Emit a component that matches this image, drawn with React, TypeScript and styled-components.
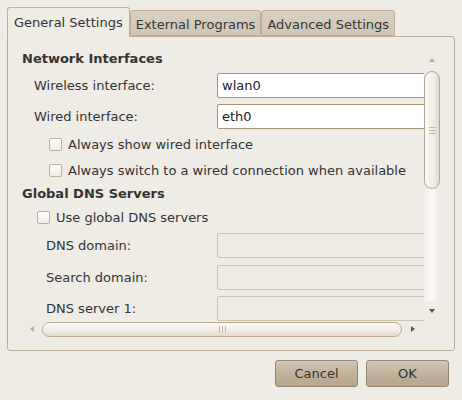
import React from 'react';
import styled, { createGlobalStyle } from 'styled-components';

const GlobalStyle = createGlobalStyle`
  html, body {
    margin: 0;
    padding: 0;
    background: #efebe5;
  }
  body {
    font-family: "DejaVu Sans", "Liberation Sans", sans-serif;
    font-size: 13px;
    color: #343434;
  }
`;

const Dialog = styled.div`
  width: 462px;
  height: 400px;
  box-sizing: border-box;
  padding: 7px 7px 0 7px;
  display: flex;
  flex-direction: column;
`;

const TabBar = styled.div`
  display: flex;
  align-items: flex-end;
  height: 29px;
  position: relative;
  z-index: 1;
`;

const Tab = styled.div<{ $active?: boolean }>`
  box-sizing: border-box;
  height: ${(p) => (p.$active ? '30px' : '26px')};
  margin-bottom: ${(p) => (p.$active ? '-1px' : '0')};
  padding: ${(p) => (p.$active ? '0 6px 1px 6px' : '2px 5px 0 5px')};
  display: flex;
  align-items: center;
  border: 1px solid ${(p) => (p.$active ? '#bfb29b' : '#bcae95')};
  border-bottom: ${(p) => (p.$active ? 'none' : '1px solid #bcae95')};
  border-radius: 3px 3px 0 0;
  background: ${(p) =>
    p.$active ? '#efebe5' : 'linear-gradient(#d9d0c0, #d1c6b3)'};
  white-space: nowrap;
`;

const Panel = styled.div`
  box-sizing: border-box;
  width: 448px;
  height: 315px;
  border: 1px solid #bcae96;
  border-radius: 0 3px 3px 3px;
  padding: 13px 13px 13px 14px;
  display: grid;
  grid-template-columns: 1fr 17px;
  grid-template-rows: 1fr 16px;
`;

const Viewport = styled.div`
  overflow: hidden;
  position: relative;
`;

const Content = styled.div`
  width: 470px;
  display: flex;
  flex-direction: column;
`;

const Heading = styled.div<{ $mt?: number }>`
  font-weight: bold;
  line-height: 17px;
  height: 17px;
  margin-top: ${(p) => p.$mt ?? 0}px;
`;

const FieldRow = styled.div<{ $indent: number; $mt: number }>`
  display: flex;
  align-items: center;
  height: 25px;
  margin-top: ${(p) => p.$mt}px;
  padding-left: ${(p) => p.$indent}px;
`;

const FieldLabel = styled.span<{ $indent: number }>`
  flex: 0 0 ${(p) => 195 - p.$indent}px;
`;

const Entry = styled.div<{ $disabled?: boolean }>`
  box-sizing: border-box;
  width: 260px;
  height: 25px;
  padding-left: 4px;
  display: flex;
  align-items: center;
  border: 1px solid ${(p) => (p.$disabled ? '#cec3ae' : '#a59577')};
  border-radius: 2px;
  background: ${(p) => (p.$disabled ? '#efebe5' : '#ffffff')};
  color: #222;
`;

const CheckRow = styled.label<{ $indent: number; $mt: number }>`
  display: flex;
  align-items: center;
  height: 17px;
  margin-top: ${(p) => p.$mt}px;
  padding-left: ${(p) => p.$indent}px;
  gap: 6px;
`;

const CheckBox = styled.span`
  box-sizing: border-box;
  width: 13px;
  height: 13px;
  border: 1px solid #bdb19b;
  border-radius: 2px;
  background: linear-gradient(#ffffff, #f1ede7);
`;

const VScroll = styled.div`
  display: flex;
  flex-direction: column;
  width: 16px;
`;

const Stepper = styled.div<{ $w: number; $h: number }>`
  width: ${(p) => p.$w}px;
  height: ${(p) => p.$h}px;
  flex: 0 0 auto;
  display: flex;
  align-items: center;
  justify-content: center;
`;

const VThumb = styled.div`
  box-sizing: border-box;
  margin-top: 1px;
  height: 118px;
  border: 1px solid #b6a88f;
  border-radius: 8px;
  background: linear-gradient(to right, #fbfaf7, #f1ece4 60%, #e2d9ca);
  display: flex;
  align-items: center;
  justify-content: center;
`;

const VTrough = styled.div`
  flex: 1;
  background: linear-gradient(to right, #f2eee8, #fbfaf8 50%, #ece7df);
`;

const HScroll = styled.div`
  display: flex;
  align-items: center;
  height: 16px;
`;

const HThumb = styled.div`
  box-sizing: border-box;
  width: 360px;
  flex: 0 0 360px;
  height: 15px;
  border: 1px solid #b6a88f;
  border-radius: 8px;
  background: linear-gradient(#fbfaf7, #f1ece4 60%, #e2d9ca);
  display: flex;
  align-items: center;
  justify-content: center;
`;

const Arrow = styled.span<{ $dir: 'up' | 'down' | 'left' | 'right'; $dim?: boolean }>`
  width: 0;
  height: 0;
  border-style: solid;
  border-color: transparent;
  ${(p) => {
    const c = p.$dim ? '#b3aa9c' : '#5d5850';
    switch (p.$dir) {
      case 'up':
        return `border-width: 0 3.5px 4px 3.5px; border-bottom-color: ${c};`;
      case 'down':
        return `border-width: 4px 3.5px 0 3.5px; border-top-color: ${c};`;
      case 'left':
        return `border-width: 3.5px 4px 3.5px 0; border-right-color: ${c};`;
      default:
        return `border-width: 3.5px 0 3.5px 4px; border-left-color: ${c};`;
    }
  }}
`;

const Grip = styled.div<{ $vertical?: boolean }>`
  display: flex;
  flex-direction: ${(p) => (p.$vertical ? 'column' : 'row')};
  gap: 2px;
  & > span {
    display: block;
    background: #c3b8a6;
    width: ${(p) => (p.$vertical ? '7px' : '1px')};
    height: ${(p) => (p.$vertical ? '1px' : '7px')};
  }
`;

const ButtonBar = styled.div`
  display: flex;
  justify-content: flex-end;
  gap: 8px;
  padding: 9px 6px 0 0;
`;

const Button = styled.button`
  box-sizing: border-box;
  width: 83px;
  height: 27px;
  border: 1px solid #978770;
  border-radius: 3px;
  background: linear-gradient(#d2c8b7, #c0b29c 50%, #b5a68d);
  font-family: inherit;
  font-size: 13px;
  color: #333;
  padding: 0;
`;

export default function App() {
  return (
    <>
      <GlobalStyle />
      <Dialog>
        <TabBar>
          <Tab $active>General Settings</Tab>
          <Tab>External Programs</Tab>
          <Tab>Advanced Settings</Tab>
        </TabBar>
        <Panel>
          <Viewport>
            <Content>
              <Heading>Network Interfaces</Heading>
              <FieldRow $indent={12} $mt={6}>
                <FieldLabel $indent={12}>Wireless interface:</FieldLabel>
                <Entry>wlan0</Entry>
              </FieldRow>
              <FieldRow $indent={12} $mt={6}>
                <FieldLabel $indent={12}>Wired interface:</FieldLabel>
                <Entry>eth0</Entry>
              </FieldRow>
              <CheckRow $indent={27} $mt={7}>
                <CheckBox />
                Always show wired interface
              </CheckRow>
              <CheckRow $indent={27} $mt={9}>
                <CheckBox />
                Always switch to a wired connection when available
              </CheckRow>
              <Heading $mt={6}>Global DNS Servers</Heading>
              <CheckRow $indent={15} $mt={7}>
                <CheckBox />
                Use global DNS servers
              </CheckRow>
              <FieldRow $indent={24} $mt={7}>
                <FieldLabel $indent={24}>DNS domain:</FieldLabel>
                <Entry $disabled />
              </FieldRow>
              <FieldRow $indent={24} $mt={7}>
                <FieldLabel $indent={24}>Search domain:</FieldLabel>
                <Entry $disabled />
              </FieldRow>
              <FieldRow $indent={24} $mt={6}>
                <FieldLabel $indent={24}>DNS server 1:</FieldLabel>
                <Entry $disabled />
              </FieldRow>
            </Content>
          </Viewport>
          <VScroll>
            <Stepper $w={16} $h={20}>
              <Arrow $dir="up" $dim />
            </Stepper>
            <VThumb>
              <Grip $vertical>
                <span />
                <span />
                <span />
              </Grip>
            </VThumb>
            <VTrough />
            <Stepper $w={16} $h={20}>
              <Arrow $dir="down" />
            </Stepper>
          </VScroll>
          <HScroll>
            <Stepper $w={20} $h={16}>
              <Arrow $dir="left" $dim />
            </Stepper>
            <HThumb>
              <Grip>
                <span />
                <span />
                <span />
              </Grip>
            </HThumb>
            <Stepper $w={22} $h={16}>
              <Arrow $dir="right" />
            </Stepper>
          </HScroll>
          <div />
        </Panel>
        <ButtonBar>
          <Button>Cancel</Button>
          <Button>OK</Button>
        </ButtonBar>
      </Dialog>
    </>
  );
}
